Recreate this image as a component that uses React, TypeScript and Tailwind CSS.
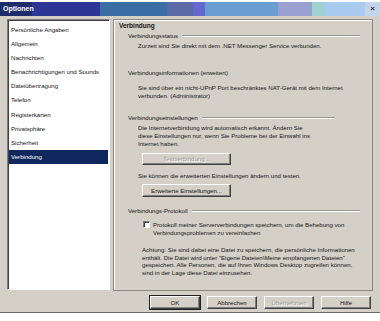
import React from 'react';

const items = [
  'Persönliche Angaben',
  'Allgemein',
  'Nachrichten',
  'Benachrichtigungen und Sounds',
  'Dateiübertragung',
  'Telefon',
  'Registerkarten',
  'Privatsphäre',
  'Sicherheit',
  'Verbindung',
];

function GroupHeader({ label, mr = 'mr-[12px]' }: { label: string; mr?: string }) {
  return (
    <div className={`flex items-center h-[8px] ml-[14px] ${mr}`}>
      <span className="whitespace-nowrap">{label}</span>
      <div className="flex-1 ml-[4px] h-[2px] border-t border-t-[#9a978f] border-b border-b-white" />
    </div>
  );
}

function Button({ label, disabled, def, className = '' }: { label: string; disabled?: boolean; def?: boolean; className?: string }) {
  return (
    <div
      className={`flex items-center justify-center bg-[#d4d0c8] border border-t-white border-l-white border-r-[#404040] border-b-[#404040] shadow-[inset_-1px_-1px_0_#808080] whitespace-nowrap ${
        def ? 'outline outline-1 outline-[#202020]' : ''
      } ${disabled ? 'text-[#9c9a94] [text-shadow:1px_1px_0_#fff]' : ''} ${className}`}
    >
      {label}
    </div>
  );
}

export default function App() {
  return (
    <div className="w-[380px] h-[321px] bg-white pt-[2px] font-['Liberation_Sans',Arial,sans-serif] text-[6.1px] text-[#151515]">
      <div className="h-[311px] bg-[#d4d0c8] border-b border-b-[#6a6a6a] flex flex-col">
        {/* title bar */}
        <div className="h-[14px] flex items-center justify-between px-[3px] bg-[linear-gradient(90deg,#1f2c6c_0px,#1f2c6c_32px,#2d3695_32px,#2d3695_100px,#3c6ea6_100px,#3c6ea6_167px,#5b6aa6_167px,#5b6aa6_193px,#6468cf_193px,#6468cf_205px,#6a9ed2_205px,#6a9ed2_278px,#9aa0d2_278px,#9aa0d2_312px,#9fd3cf_312px,#9fd3cf_325px,#a9cbf0_325px,#a9cbf0_365px,#c4d4ea_365px)]">
          <span className="text-white font-bold text-[7px]">Optionen</span>
          <span className="text-[#303030] font-bold text-[8px] leading-none mr-[2px]">×</span>
        </div>

        <div className="flex pt-[3px] pl-[7px] gap-[3px] h-[274px]">
          {/* list */}
          <div className="w-[103px] h-[271px] bg-white border border-t-[#808080] border-l-[#808080] border-b-white border-r-white shadow-[inset_1px_1px_0_#404040] pt-[2px] pl-[1px] pr-[1px]">
            {items.map((it) => (
              <div
                key={it}
                className={`h-[14.2px] flex items-center pl-[2px] whitespace-nowrap ${
                  it === 'Verbindung' ? 'bg-[#10275e] text-white' : ''
                }`}
              >
                {it}
              </div>
            ))}
          </div>

          {/* panel */}
          <div className="w-[260px] h-[272px] border border-[#8a8780] shadow-[inset_1px_1px_0_#fff] flex flex-col">
            <div className="h-[9px] mt-[1px] pl-[5px] font-bold text-[6.5px] flex items-center">Verbindung</div>

            <div className="mt-[2px]">
              <GroupHeader label="Verbindungsstatus" />
            </div>
            <div className="mt-[2px] ml-[24px] leading-[8px] whitespace-nowrap">
              Zurzeit sind Sie direkt mit dem .NET Messenger Service verbunden.
            </div>

            <div className="mt-[19px] ml-[14px] leading-[8px] whitespace-nowrap">
              Verbindungsinformationen (erweitert)
            </div>
            <div className="mt-[7px] ml-[24px] leading-[8px] whitespace-nowrap">
              <div>Sie sind über ein nicht-UPnP Port beschränktes NAT-Gerät mit dem Internet</div>
              <div>verbunden. (Administrator)</div>
            </div>

            <div className="mt-[14px]">
              <GroupHeader label="Verbindungseinstellungen" mr="mr-[37px]" />
            </div>
            <div className="mt-[2px] ml-[24px] leading-[8px] whitespace-nowrap">
              <div>Die Internetverbindung wird automatisch erkannt. Ändern Sie</div>
              <div>diese Einstellungen nur, wenn Sie Probleme bei der Einwahl ins</div>
              <div>Internet haben.</div>
            </div>
            <Button label="Testverbindung..." disabled className="mt-[5px] ml-[28px] w-[89px] h-[12px]" />

            <div className="mt-[7px] ml-[24px] leading-[8px] whitespace-nowrap">
              Sie können die erweiterten Einstellungen ändern und testen.
            </div>
            <Button label="Erweiterte Einstellungen..." className="mt-[4px] ml-[28px] w-[89px] h-[13px]" />

            <div className="mt-[10px]">
              <GroupHeader label="Verbindungs-Protokoll" />
            </div>
            <div className="mt-[6px] ml-[29px] flex leading-[8px] whitespace-nowrap">
              <div className="w-[7px] h-[7px] bg-white border border-t-[#808080] border-l-[#808080] border-b-white border-r-white shadow-[inset_1px_1px_0_#404040]" />
              <div className="ml-[3px]">
                <div>Protokoll meiner Serververbindungen speichern, um die Behebung von</div>
                <div>Verbindungsproblemen zu vereinfachen</div>
              </div>
            </div>

            <div className="mt-[9px] ml-[28px] leading-[7.6px] whitespace-nowrap">
              <div>Achtung: Sie sind dabei eine Datei zu speichern, die persönliche Informationen</div>
              <div>enthält. Die Datei wird unter "Eigene Dateien\Meine empfangenen Dateien"</div>
              <div>gespeichert. Alle Personen, die auf Ihren Windows Desktop zugreifen können,</div>
              <div>sind in der Lage diese Datei einzusehen.</div>
            </div>
          </div>
        </div>

        {/* buttons */}
        <div className="flex justify-end gap-[7px] pr-[9px] mt-[6px]">
          <Button label="OK" def className="w-[50px] h-[13px]" />
          <Button label="Abbrechen" className="w-[50px] h-[13px]" />
          <Button label="Übernehmen" disabled className="w-[50px] h-[13px]" />
          <Button label="Hilfe" className="w-[50px] h-[13px]" />
        </div>
      </div>
    </div>
  );
}
